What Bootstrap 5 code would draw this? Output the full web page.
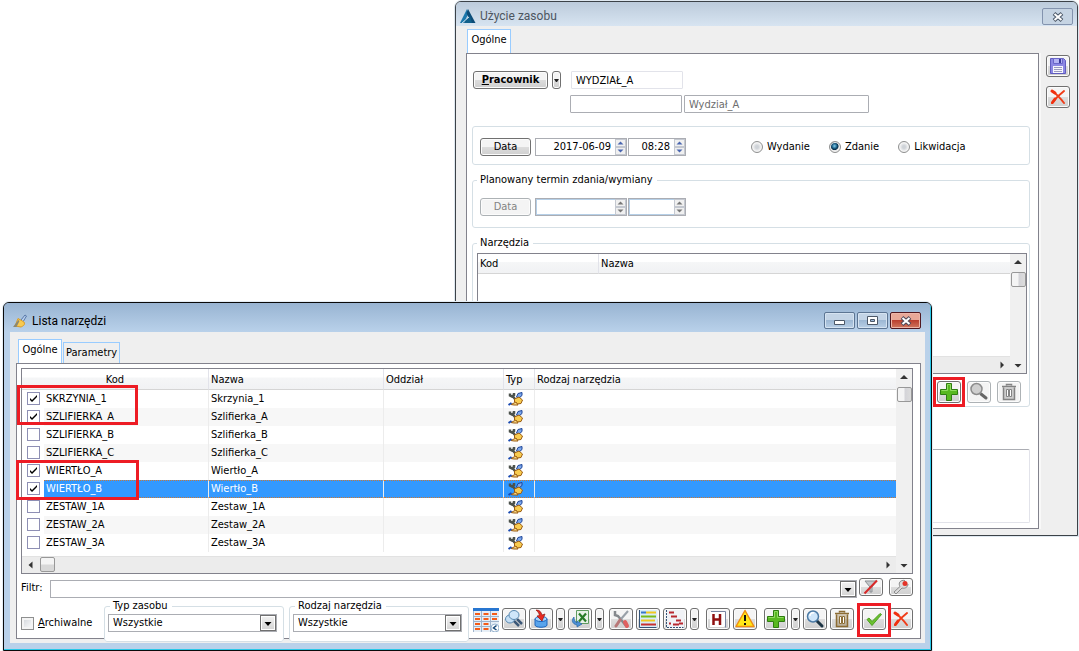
<!DOCTYPE html>
<html lang="pl">
<head>
<meta charset="utf-8">
<meta name="viewport" content="width=device-width, initial-scale=1">
<title>Lista narzędzi</title>
<link rel="stylesheet" href="https://cdn.jsdelivr.net/npm/bootstrap@5.3.0/dist/css/bootstrap.min.css">
<script src="https://cdn.jsdelivr.net/npm/bootstrap@5.3.0/dist/js/bootstrap.bundle.min.js"></script>
<style>
body { font: 11px/14px "DejaVu Sans Condensed", "Noto Sans", sans-serif; color: #000; background: #fff; }
.desktop { min-height: 100vh; }
.win { position: absolute; border: 1px solid #3c4248; border-radius: 6px 6px 0 0; overflow: hidden; background: #efefef; }
.win-back { left: 455px; right: 1px; top: 1px; box-shadow: 0 0 0 1px #dfe8f0; }
.win-front { left: 3px; right: 147px; top: 302px; border-color: #0a0a0a; background: #b9d1ea; box-shadow: 0 0 0 1px #e4edf5; }
.win-front::after { content: ""; position: absolute; inset: 0; border: solid #28c8e8; border-width: 0 1px 1px 0; pointer-events: none; }
.titlebar { font: 12px/16px Roboto, "Open Sans", sans-serif; }
.win-back .titlebar { height: 24px; padding: 2px 4px 0 4px; color: #4c5560; background: linear-gradient(#bccbdb, #d7e4f1); }
.win-front .titlebar { height: 29px; padding: 6px 8px 0 8px; background: linear-gradient(#98b4d2, #b9d1ea); }
.win-back .win-body { margin: 0 2px 0 3px; padding: 3px 5px 6px 7px; }
.win-front .win-body { margin: 0 6px 7px; padding: 7px 4px 4px 6px; background: #efefef; }
.caps { gap: 2px; padding: 3px 2px 0 0; }
.cap { width: 31px; height: 17px; padding: 0; border: 1px solid #5c7593; border-radius: 2px; background: linear-gradient(#c3d4e6 45%, #9db8d4 50%, #b8cfe6); box-shadow: inset 0 0 0 1px #d5e3f1; line-height: 0; }
.cap-off { border-color: #8393ae; background: #c6d4e3; box-shadow: none; }
.cap-red { border-color: #501820; background: linear-gradient(#e8a898 45%, #bb4030 50%, #d07860); box-shadow: inset 0 0 0 1px #edb5a8; }
.tabs { padding-left: 2px; gap: 1px; }
.win-back .tabs { padding-left: 1px; }
.tabs button { border: 1px solid #99ccff; border-bottom: 0; background: #efefef; padding: 0 2px; height: 21px; line-height: 20px; }
.tabs .on { height: 24px; background: #fff; padding-bottom: 4px; width: 44px; line-height: 16px; }
.pane { border: 1px solid #82828c; background: #fff; }
.win-back .pane { margin-right: 7px; padding: 17px 8px 5px 5px; box-shadow: 2px 0 #f8f8f8; }
.win-front .pane { padding: 4px 7px 0 4px; min-height: 276px; }
.side { gap: 9px; padding-top: 26px; }
.xbtn { border: 1px solid #707070; border-radius: 3px; background: linear-gradient(#f4f4f4 48%, #dcdcdc 52%, #cfcfcf); box-shadow: inset 0 0 0 1px #fcfcfc; padding: 0; line-height: 0; color: #000; flex: none; }
.xbtn:disabled { border-color: #adb2b5; background: #f4f4f4; color: #838383; }
.tool { width: 24px; height: 22px; }
.tool svg { width: 20px; height: 20px; }
.tool.low { height: 18px; }
.low svg { width: 18px; height: 16px; }
.drop { width: 9px; height: 22px; }
.drop.low { height: 18px; }
.drop::before { content: ""; display: block; margin: 0 auto; width: 5px; border: 2px solid transparent; border-top: 3px solid #222; border-bottom: 0; }
.wide { width: 51px; height: 18px; line-height: 14px; }
.person { width: 75px; height: 18px; line-height: 14px; font-weight: bold; }
.who { padding-left: 1px; margin-bottom: 6px; }
.who .xin { margin-left: 10px; }
.xin { height: 18px; border: 1px solid #abadb3; border-radius: 1px; padding: 0 4px; background: #fff; color: #000; min-width: 0; }
.xin-soft { border-color: #e2e3ea; }
.w112 { width: 112px; }
.w185 { width: 185px; color: #6d6d6d; }
.indent { padding-left: 98px; gap: 2px; }
fieldset.grp { border: 1px solid #d5dfe5; border-radius: 3px; }
.grp legend { float: none; width: auto; font-size: 11px; line-height: 14px; margin: 0; padding: 0 4px 0 3px; }
.when { height: 39px; padding: 3px 7px 0; margin-top: 13px; }
.radios { gap: 19px; margin-left: 64px; }
.plan { margin-top: 8px; padding: 0 7px 11px; }
.plan legend { margin-left: -3px; }
.plan > div { padding-top: 11px; }
.tools { margin-top: 8px; padding: 0 2px 3px 4px; }
.tools legend { margin-bottom: 3px; }
.acts { gap: 6px; padding: 7px 6px 0; }
.spin { border: 1px solid #abadb3; height: 18px; background: #fff; margin-right: 1px; }
.spin input { border: 0; padding: 0 4px 0 0; text-align: right; min-width: 0; flex: 1; background: #fff; }
.spin.dis input { box-shadow: inset 1px 1px #b5cfe7, inset 0 -1px #b5cfe7; }
.spin button { display: block; width: 11px; height: 8px; padding: 0; border: 1px solid #c4c8d0; background: #f0f0f0; line-height: 0; color: #4a66b0; }
.spin button:disabled { color: #777; }
.spin svg { width: 7px; height: 4px; display: block; margin: auto; }
.w92 { width: 92px; }
.w58 { width: 58px; }
.rad { appearance: none; width: 12px; height: 12px; margin: 0; border: 1px solid #8e8f8f; border-radius: 50%; background: radial-gradient(#cfd3d8 20%, #f4f4f4 60%); box-shadow: inset 0 0 0 1px #f4f4f4; }
.rad:checked { background: radial-gradient(circle at 45% 40%, #7fd0f0 0, #0c4a70 35%, #0c3048 45%, #e8e8e8 55%); }
.gridbox { border: 1px solid #82828c; background: #fff; }
.data { table-layout: fixed; width: 100%; border-collapse: separate; border-spacing: 0; }
.data th { height: 20px; padding: 1px 2px 0; font-weight: normal; border-bottom: 1px solid #d5d5d5; border-right: 1px solid #e2e3ea; background: linear-gradient(#fff 40%, #f5f6f7 45%, #f1f2f4); }
.front-rows .data th { height: 21px; }
.data td { height: 18px; padding: 0 2px; border-right: 1px solid #ececec; line-height: 16px; white-space: nowrap; }
.data th:last-child, .data td:last-child, .data td:first-child { border-right: 0; }
.data tbody tr:nth-child(even) td:not(:first-child) { background: #f7f7f7; }
.data tbody tr.sel td:not(:first-child) { background: #3399ff; color: #fff; border-top: 1px dotted #c87838; border-bottom: 1px dotted #c87838; line-height: 14px; }
.data svg { width: 16px; height: 16px; display: block; margin-left: 2px; }
.c-kod { width: 121px; }
.c1 { width: 22px; }
.c2 { width: 165px; }
.c3 { width: 175px; }
.c4 { width: 120px; }
.c5 { width: 31px; }
.chk { appearance: none; display: block; width: 13px; height: 13px; margin: 0 0 2px 3px; border: 1px solid #8e8fb4; background: #fff; }
.chk:checked { background: #fff url("data:image/svg+xml,%3Csvg xmlns='http://www.w3.org/2000/svg' viewBox='0 0 11 11'%3E%3Cpath d='M2 5v2l2 2 5-5V2L4 7z'/%3E%3C/svg%3E"); }
.chk-gray { margin: 0; border-color: #8e8f8f; background: linear-gradient(135deg, #cfd3d8, #fff); box-shadow: inset 0 0 0 2px #f4f4f4; }
.vbar { width: 16px; background: #f0f0f0; flex: none; gap: 2px; }
.hbar { height: 17px; background: #ececec; border-top: 1px solid #e2e2e2; gap: 2px; }
.thumb { border: 1px solid #989898; border-radius: 2px; width: 15px; height: 15px; background: linear-gradient(90deg, #f4f4f4 45%, #d4d4d8 55%, #dcdcdc); }
.hbar .thumb { background: linear-gradient(#f4f4f4 45%, #d8d8d8 55%); }
.arr { width: 16px; height: 16px; display: block; }
.tall { height: 82px; }
.front-rows { height: 187px; }
.mark-red { position: absolute; border: 3px solid #ed1c24; pointer-events: none; z-index: 2; }
.m1 { left: -5px; top: 16px; width: 121px; height: 40px; }
.m2 { left: -6px; top: 91px; width: 123px; height: 40px; }
.m3 { inset: -4px; }
.m4 { inset: -5px; }
.combo { position: relative; height: 19px; }
.combo select, .combo input { appearance: none; width: 100%; height: 18px; border: 1px solid #abadb3; padding: 0 4px; background: #fff; color: #000; border-radius: 0; display: block; }
.combo::after { content: ""; position: absolute; right: 1px; top: 1px; width: 16px; height: 16px; border: 1px solid #707070; pointer-events: none; background: url("data:image/svg+xml,%3Csvg xmlns='http://www.w3.org/2000/svg' viewBox='0 0 14 14'%3E%3Cpath d='M3.500 6h7L7 10z'/%3E%3C/svg%3E"), linear-gradient(#f2f2f2, #d4d4d4); box-shadow: inset 0 0 0 1px #fff; }
.filter { margin-top: 4px; }
.filter .combo { padding-top: 2px; height: 21px; margin-right: 2px; }
.filter .combo::after { top: 3px; }
.filter label { padding-top: 3px; width: 29px; }
.filter .tool + .tool { margin-left: 6px; }
.pick { width: 180px; background: #fff; margin-bottom: -4px; height: 43px; }
.pick legend { margin-left: 5px; }
.pick .combo { margin: 1px 6px 0 3px; }
.pick-2 { margin-left: 5px; }
.arch { padding-top: 17px; width: 83px; }
.notes { display: block; width: 100%; height: 74px; margin-top: 42px; border: 1px solid #e2e3ea; border-top-color: #abadb3; border-radius: 2px; resize: none; }
.strip { margin: 9px 0 0 auto; gap: 3px; }
.sep-s { margin-right: 2px; }
.sep-l { margin-right: 5px; }
.flat { border: 0; background: none; box-shadow: none; height: 24px; }
.brown { color: #8c6c34; }
</style>
</head>
<body>
<svg class="d-none" xmlns="http://www.w3.org/2000/svg">
  <symbol id="i-up" viewBox="0 0 16 16"><path d="M4 10 8 6l4 4z" fill="#333"/></symbol>
  <symbol id="i-down" viewBox="0 0 16 16"><path d="M4.500 7h7L8 10.500z" fill="#333"/></symbol>
  <symbol id="i-left" viewBox="0 0 16 16"><path d="M10.500 4.500v7L6.500 8z" fill="#333"/></symbol>
  <symbol id="i-right" viewBox="0 0 16 16"><path d="M6.500 4.500v7L10 8z" fill="#333"/></symbol>
  <symbol id="i-spu" viewBox="0 0 7 4"><path d="M.5 3.500 3.500.5l3 3z" fill="currentColor"/></symbol>
  <symbol id="i-spd" viewBox="0 0 7 4"><path d="M.5.5l3 3 3-3z" fill="currentColor"/></symbol>
  <symbol id="i-x" viewBox="0 0 20 20"><path d="M4 4c3 2 9 8 12 12M16 4C12 7 8 11 4 16" stroke="#f03c18" stroke-width="2" fill="none" stroke-linecap="round"/><path d="M4 4l3 2M4.500 15.500 7 12" stroke="#f03010" stroke-width="3" stroke-linecap="round"/></symbol>
  <symbol id="i-save" viewBox="0 0 20 20"><path d="M2.500 2.500h13l2 2v13h-15z" fill="#8c88e4" stroke="#605cc0"/><path d="M5.500 2.500h9v5h-9z" fill="#b4b4f4" stroke="#6a66c8"/><path d="M11 3h2v4h-2z" fill="#383898"/><path d="M5 10h10v7H5z" fill="#f6f6fc"/><path d="M6 11.500h8M6 13.500h8M6 15.500h8" stroke="#9a9ac0"/></symbol>
  <symbol id="i-plus" viewBox="0 0 20 20"><path d="M7.500 1.500h5v6h6v5h-6v6h-5v-6h-6v-5h6z" fill="#58b820" stroke="#2e7d10"/><path d="M8.500 8.500v-6h3v6h6" fill="none" stroke="#90dc60"/><path d="M2.500 8.500h6" stroke="#90dc60"/></symbol>
  <symbol id="i-mag" viewBox="0 0 20 20"><path d="m12 12 5 5" stroke="#1c3444" stroke-width="3" stroke-linecap="round"/><circle cx="8" cy="7.500" r="5.500" fill="#cfe6fa" stroke="#4c7aa4" stroke-width="1.500"/><path d="M5 7a3 3 0 0 1 4-3" stroke="#fff" stroke-width="1.500" fill="none"/></symbol>
  <symbol id="i-maggray" viewBox="0 0 20 20"><path d="m12 12 5 4" stroke="#666" stroke-width="3" stroke-linecap="round"/><circle cx="7.500" cy="7" r="5.500" fill="#cfcfcf" stroke="#8c8c8c" stroke-width="1.500"/></symbol>
  <symbol id="i-mags" viewBox="0 0 20 20"><path d="m10 12 5 5M13 10l5 5" stroke="#3c5878" stroke-width="2.500"/><ellipse cx="6" cy="10" rx="4.500" ry="4" fill="#c4def4" stroke="#5888b0"/><ellipse cx="10" cy="6" rx="5" ry="4.500" fill="#cfe6fa" stroke="#5888b0"/></symbol>
  <symbol id="i-trash" viewBox="0 0 20 20"><path d="M4.500 5.500h11v12h-11z" fill="currentColor" opacity=".35"/><path d="M7.500 3.500v-1h5v1M3 4.500h14M4.500 5.500v12h11v-12" fill="none" stroke="currentColor" stroke-width="1.500"/><path d="M7.500 7.500h2v7h-2zM10.500 7.500h2v7h-2z" fill="#fff" stroke="currentColor"/></symbol>
  <symbol id="i-tool" viewBox="0 0 16 16"><path d="M2 2.500v2l2 1 2-1.500v-2M4.500 5l2.500 3" stroke="#4c524c" stroke-width="2.500" fill="none"/><path d="M8.500 6 10 2.500l4-1v3L11 7z" fill="#7ca8ec" stroke="#1c4498"/><path d="M6.500 8 11 6l3.500 3-1.500 3.500-4 .500-2.500-2z" fill="#f8cc50" stroke="#9c5c10"/><path d="M3 13.500 8 11l2 3H6z" fill="#f8dc88" stroke="#9c5c10"/><path d="m.5 14 3-2" stroke="#1848b0" stroke-width="2"/></symbol>
  <symbol id="i-brush" viewBox="0 0 16 16"><path d="m9 7 4-5 1.500 1-3 5" fill="#b8d0f0" stroke="#5878a8"/><path d="M6 5.500 12 9c1.500 3-1 4-3 5L3 13z" fill="#f8ca50" stroke="#d89c28"/><path d="M1 14 6.500 7l1 1-3 6z" fill="#8c8870"/></symbol>
  <symbol id="i-calgrid" viewBox="0 0 26 24"><path d="M0 0h26v24H0z" fill="#e6eef6"/><path d="M0 0h26v3H0z" fill="#2876d0"/><path d="M2 6h5M10.500 6h5M19 6h5M2 11h5M10.500 11h5M19 11h5M2 16h5M10.500 16h5M2 21h5M10.500 21h5" stroke="#f45c18" stroke-width="2"/><path d="M0 8.500h26M0 13.500h26M0 18.500h18M8.500 3v21M17.500 3v21M.5 3v21" stroke="#a0b4cc"/><circle cx="22" cy="20" r="4" fill="#fff" stroke="#98b4d0"/><path d="m23.500 17.500-3 2.500 3 2" fill="none" stroke="#184878" stroke-width="1.500"/></symbol>
  <symbol id="i-import" viewBox="0 0 20 20"><path d="M4 10v6c0 3 12 3 12 0v-6" fill="#58a4ec" stroke="#1c64bc"/><ellipse cx="10" cy="10" rx="6" ry="2.500" fill="#a8d4fa" stroke="#1c64bc"/><path d="M5 1c4 0 5 2 6 5l3-1-3 7-5-5 2.500-.500C8 4 7 3 5 1z" fill="#e82820" stroke="#901810" stroke-width=".7"/></symbol>
  <symbol id="i-xls" viewBox="0 0 20 20"><path d="M6.500 1.500h12v13h-12z" fill="#e8f2e8" stroke="#609c60"/><path d="m9 4.500 7 8M16 4.500l-7 8" stroke="#287c28" stroke-width="2.200"/><path d="M4 8c-3 3-2 7 3 8v2l5-3-5-3v2c-2-1-3-3-3-6z" fill="#4c90d4" stroke="#2864a4" stroke-width=".7"/></symbol>
  <symbol id="i-wrench" viewBox="0 0 20 20"><path d="M4 2v4l3 1 9 11" fill="none" stroke="#84888c" stroke-width="2.500"/><path d="m17 2-7 8" stroke="#98a0a8" stroke-width="2"/><path d="m9 11-4 6" stroke="#b87878" stroke-width="3" stroke-linecap="round"/><path d="m14 13 2 4" stroke="#e06060" stroke-width="4" stroke-linecap="round"/></symbol>
  <symbol id="i-bars" viewBox="0 0 20 20"><path d="M2 1h17v18H2z" fill="#d8ecf8"/><path d="M3 3.500h5" stroke="#3878c8" stroke-width="2"/><path d="M8 3.500h10" stroke="#f0c820" stroke-width="2"/><path d="M3 7.500h15" stroke="#78bc18" stroke-width="2"/><path d="M3 11.500h14" stroke="#f0c820" stroke-width="2"/><path d="M3 15.500h15" stroke="#c83030" stroke-width="2"/><path d="M1.500 1v17.500h17" stroke="#345478" fill="none"/></symbol>
  <symbol id="i-gantt" viewBox="0 0 20 20"><path d="M2 1h17v18H2z" fill="#f0f2f6"/><path d="M4 3.500h5M6 7.500h6M11 11.500h5M8 15.500h6M14 14.500h4M4 14.500h2" stroke="#b82830" stroke-width="2"/><path d="M1.500 1v17.500h17" stroke="#345478" stroke-dasharray="2 1" fill="none"/></symbol>
  <symbol id="i-h" viewBox="0 0 20 20"><path d="M3 2.500h14.500v16" fill="#fff" stroke="#7884a0"/><path d="M2 3h14v15H2z" fill="#fff"/><path d="M5.500 5v11M12 5v11M5 10.500h7" stroke="#901010" stroke-width="2.500"/></symbol>
  <symbol id="i-warn" viewBox="0 0 20 20"><path d="M10 1.500 19 17.500H1z" fill="#ffe818" stroke="#f09010" stroke-width="1.500" stroke-linejoin="round"/><path d="M10 6v6M10 14v2" stroke="#111" stroke-width="2"/></symbol>
  <symbol id="i-ok" viewBox="0 0 20 20"><path d="m3 10.500 5 6L17.500 5.500 16 4.500l-8 8L5 9z" fill="#6cc030" stroke="#4ca020" stroke-linejoin="round"/></symbol>
  <symbol id="i-filt" viewBox="0 0 18 16"><path d="M3 2h11L10 8v5H8V8z" fill="#c4c8cc" stroke="#8c9094"/><path d="M2.500 14.500 15 1.500" stroke="#d82828" stroke-width="2"/></symbol>
  <symbol id="i-key" viewBox="0 0 18 16"><path d="M13 1.500c-5-1-7 3-5 6l-6 5.500 2 2 6-6c3 1 6-1 6-4" fill="#dcdcdc" stroke="#8c8c8c"/><circle cx="13" cy="4.500" r="2.500" fill="#e43428"/></symbol>
</svg>

<main class="desktop">
  <section class="win win-back" aria-label="Użycie zasobu">
    <header class="titlebar d-flex align-items-start">
      <svg width="16" height="16" viewBox="0 0 16 16" class="mt-1 me-1"><path d="M7 1 0 15h3.500l5-9z" fill="#1c78ac"/><path d="M8 1l7.500 14H11L6.500 5z" fill="#0c4c78"/><path d="m5 12 5-4 2 7H4z" fill="#10608c"/><path d="m2 15 7-6" stroke="#c8dcec" stroke-width="1"/></svg>
      <span class="flex-grow-1 mt-1">Użycie zasobu</span>
      <button class="cap cap-off mt-1" aria-label="Zamknij"><svg width="12" height="10" viewBox="0 0 12 10"><path d="m2 1.500 8 7M10 1.500l-8 7" stroke="#4c5868" stroke-width="4"/><path d="m2.500 2 7 6M9.500 2l-7 6" stroke="#fff" stroke-width="2"/></svg></button>
    </header>
    <div class="win-body d-flex">
      <div class="flex-grow-1">
        <div class="tabs d-flex align-items-end"><button class="on">Ogólne</button></div>
        <div class="pane">
          <div class="who d-flex align-items-center">
            <button class="xbtn person me-1"><u>P</u>racownik</button>
            <button class="xbtn drop low" aria-label="Wybierz rodzaj"></button>
            <input class="xin xin-soft w112" aria-label="Kod" value="WYDZIAŁ_A">
          </div>
          <div class="d-flex indent">
            <input class="xin w112" aria-label="Nazwisko">
            <input class="xin w185" aria-label="Nazwa wydziału" value="Wydział_A">
          </div>
          <fieldset class="grp when d-flex align-items-center">
            <button class="xbtn wide">Data</button>
            <div class="spin d-flex w92 ms-1"><input aria-label="Data" value="2017-06-09"><div><button aria-label="Więcej"><svg><use href="#i-spu"/></svg></button><button aria-label="Mniej"><svg><use href="#i-spd"/></svg></button></div></div>
            <div class="spin d-flex w58"><input aria-label="Godzina" value="08:28"><div><button aria-label="Więcej"><svg><use href="#i-spu"/></svg></button><button aria-label="Mniej"><svg><use href="#i-spd"/></svg></button></div></div>
            <div class="radios d-flex">
              <label class="d-flex align-items-center gap-1"><input class="rad" type="radio" name="op">Wydanie</label>
              <label class="d-flex align-items-center gap-1"><input class="rad" type="radio" name="op" checked>Zdanie</label>
              <label class="d-flex align-items-center gap-1"><input class="rad" type="radio" name="op">Likwidacja</label>
            </div>
          </fieldset>
          <fieldset class="grp plan">
            <legend>Planowany termin zdania/wymiany</legend>
            <div class="d-flex">
              <button class="xbtn wide" disabled>Data</button>
              <div class="spin dis d-flex w92 ms-1"><input aria-label="Planowana data" disabled><div><button disabled aria-label="Więcej"><svg><use href="#i-spu"/></svg></button><button disabled aria-label="Mniej"><svg><use href="#i-spd"/></svg></button></div></div>
              <div class="spin dis d-flex w58"><input aria-label="Planowana godzina" disabled><div><button disabled aria-label="Więcej"><svg><use href="#i-spu"/></svg></button><button disabled aria-label="Mniej"><svg><use href="#i-spd"/></svg></button></div></div>
            </div>
          </fieldset>
          <fieldset class="grp tools">
            <legend>Narzędzia</legend>
            <div class="gridbox d-flex">
              <div class="flex-grow-1">
                <table class="data"><colgroup><col class="c-kod"><col></colgroup><thead><tr><th>Kod</th><th>Nazwa</th></tr></thead></table>
                <div class="tall"></div>
                <div class="hbar d-flex justify-content-end"><svg class="arr"><use href="#i-right"/></svg></div>
              </div>
              <div class="vbar d-flex flex-column align-items-center">
                <svg class="arr"><use href="#i-up"/></svg><div class="thumb"></div><svg class="arr mt-auto"><use href="#i-down"/></svg>
              </div>
            </div>
            <div class="d-flex justify-content-end acts">
              <div class="position-relative"><button class="xbtn tool" aria-label="Dodaj"><svg><use href="#i-plus"/></svg></button><span class="mark-red m3"></span></div>
              <button class="xbtn tool" disabled aria-label="Podgląd"><svg><use href="#i-maggray"/></svg></button>
              <button class="xbtn tool" disabled aria-label="Usuń"><svg><use href="#i-trash"/></svg></button>
            </div>
          </fieldset>
          <textarea class="notes" aria-label="Uwagi"></textarea>
        </div>
      </div>
      <div class="side d-flex flex-column">
        <button class="xbtn tool" aria-label="Zapisz"><svg><use href="#i-save"/></svg></button>
        <button class="xbtn tool" aria-label="Anuluj"><svg><use href="#i-x"/></svg></button>
      </div>
    </div>
  </section>

  <section class="win win-front" aria-label="Lista narzędzi">
    <header class="titlebar d-flex align-items-start">
      <svg width="16" height="16" class="me-1 mt-1"><use href="#i-brush"/></svg>
      <span class="flex-grow-1 mt-1">Lista narzędzi</span>
      <div class="caps d-flex">
        <button class="cap" aria-label="Minimalizuj"><svg width="11" height="9" viewBox="0 0 11 9"><path d="M.5 4.500h10v4H.5z" fill="#fff" stroke="#4c5868"/></svg></button>
        <button class="cap" aria-label="Maksymalizuj"><svg width="11" height="9" viewBox="0 0 11 9"><path d="M.5.5h10v8H.5z" fill="#fff" stroke="#4c5868"/><path d="M3.500 3.500h4v2h-4z" fill="#9cb8d8" stroke="#4c5868"/></svg></button>
        <button class="cap cap-red" aria-label="Zamknij"><svg width="12" height="10" viewBox="0 0 12 10"><path d="m2 1.500 8 7M10 1.500l-8 7" stroke="#4c4858" stroke-width="4"/><path d="m2.500 2 7 6M9.500 2l-7 6" stroke="#fff" stroke-width="2"/></svg></button>
      </div>
    </header>
    <div class="win-body">
      <div class="tabs d-flex align-items-end"><button class="on">Ogólne</button><button>Parametry</button></div>
      <div class="pane">
        <div class="gridbox d-flex position-relative">
          <span class="mark-red m1"></span><span class="mark-red m2"></span>
          <div class="flex-grow-1">
            <div class="front-rows">
              <table class="data">
                <colgroup><col class="c1"><col class="c2"><col class="c3"><col class="c4"><col class="c5"><col></colgroup>
                <thead><tr><th colspan="2" class="text-center">Kod</th><th>Nazwa</th><th>Oddział</th><th>Typ</th><th>Rodzaj narzędzia</th></tr></thead>
                <tbody>
                  <tr><td><input class="chk" type="checkbox" aria-label="SKRZYNIA_1" checked></td><td>SKRZYNIA_1</td><td>Skrzynia_1</td><td></td><td><svg><use href="#i-tool"/></svg></td><td></td></tr>
                  <tr><td><input class="chk" type="checkbox" aria-label="SZLIFIERKA_A" checked></td><td>SZLIFIERKA_A</td><td>Szlifierka_A</td><td></td><td><svg><use href="#i-tool"/></svg></td><td></td></tr>
                  <tr><td><input class="chk" type="checkbox" aria-label="SZLIFIERKA_B"></td><td>SZLIFIERKA_B</td><td>Szlifierka_B</td><td></td><td><svg><use href="#i-tool"/></svg></td><td></td></tr>
                  <tr><td><input class="chk" type="checkbox" aria-label="SZLIFIERKA_C"></td><td>SZLIFIERKA_C</td><td>Szlifierka_C</td><td></td><td><svg><use href="#i-tool"/></svg></td><td></td></tr>
                  <tr><td><input class="chk" type="checkbox" aria-label="WIERTŁO_A" checked></td><td>WIERTŁO_A</td><td>Wiertło_A</td><td></td><td><svg><use href="#i-tool"/></svg></td><td></td></tr>
                  <tr class="sel"><td><input class="chk" type="checkbox" aria-label="WIERTŁO_B" checked></td><td>WIERTŁO_B</td><td>Wiertło_B</td><td></td><td><svg><use href="#i-tool"/></svg></td><td></td></tr>
                  <tr><td><input class="chk" type="checkbox" aria-label="ZESTAW_1A"></td><td>ZESTAW_1A</td><td>Zestaw_1A</td><td></td><td><svg><use href="#i-tool"/></svg></td><td></td></tr>
                  <tr><td><input class="chk" type="checkbox" aria-label="ZESTAW_2A"></td><td>ZESTAW_2A</td><td>Zestaw_2A</td><td></td><td><svg><use href="#i-tool"/></svg></td><td></td></tr>
                  <tr><td><input class="chk" type="checkbox" aria-label="ZESTAW_3A"></td><td>ZESTAW_3A</td><td>Zestaw_3A</td><td></td><td><svg><use href="#i-tool"/></svg></td><td></td></tr>
                </tbody>
              </table>
            </div>
            <div class="hbar d-flex"><svg class="arr"><use href="#i-left"/></svg><div class="thumb"></div><svg class="arr ms-auto"><use href="#i-right"/></svg></div>
          </div>
          <div class="vbar d-flex flex-column align-items-center">
            <svg class="arr"><use href="#i-up"/></svg><div class="thumb"></div><svg class="arr mt-auto"><use href="#i-down"/></svg>
          </div>
        </div>
        <div class="filter d-flex">
          <label for="filtr">Filtr:</label>
          <div class="combo flex-grow-1"><input id="filtr"></div>
          <button class="xbtn tool low" aria-label="Wyczyść filtr"><svg><use href="#i-filt"/></svg></button>
          <button class="xbtn tool low" aria-label="Konfiguruj filtr"><svg><use href="#i-key"/></svg></button>
        </div>
        <div class="bottom d-flex align-items-start">
          <label class="arch d-flex align-items-center gap-1"><input class="chk chk-gray" type="checkbox"><span><u>A</u>rchiwalne</span></label>
          <fieldset class="grp pick"><legend>Typ zasobu</legend><div class="combo"><select aria-label="Typ zasobu"><option>Wszystkie</option></select></div></fieldset>
          <fieldset class="grp pick pick-2"><legend>Rodzaj narzędzia</legend><div class="combo"><select aria-label="Rodzaj narzędzia"><option>Wszystkie</option></select></div></fieldset>
          <div class="strip d-flex">
            <button class="xbtn flat" aria-label="Harmonogram"><svg width="26" height="24"><use href="#i-calgrid"/></svg></button>
            <button class="xbtn tool" aria-label="Szukaj"><svg><use href="#i-mags"/></svg></button>
            <button class="xbtn tool" aria-label="Import"><svg><use href="#i-import"/></svg></button>
            <button class="xbtn drop" aria-label="Import – więcej"></button>
            <button class="xbtn tool" aria-label="Eksport do arkusza"><svg><use href="#i-xls"/></svg></button>
            <button class="xbtn drop sep-s" aria-label="Eksport – więcej"></button>
            <button class="xbtn tool" aria-label="Serwis"><svg><use href="#i-wrench"/></svg></button>
            <button class="xbtn tool" aria-label="Obciążenie"><svg><use href="#i-bars"/></svg></button>
            <button class="xbtn tool" aria-label="Wykres Gantta"><svg><use href="#i-gantt"/></svg></button>
            <button class="xbtn drop me-1" aria-label="Wykres – więcej"></button>
            <button class="xbtn tool" aria-label="Historia"><svg><use href="#i-h"/></svg></button>
            <button class="xbtn tool me-1" aria-label="Ostrzeżenia"><svg><use href="#i-warn"/></svg></button>
            <button class="xbtn tool" aria-label="Dodaj"><svg><use href="#i-plus"/></svg></button>
            <button class="xbtn drop" aria-label="Dodaj – więcej"></button>
            <button class="xbtn tool" aria-label="Podgląd"><svg><use href="#i-mag"/></svg></button>
            <button class="xbtn tool brown sep-l" aria-label="Usuń"><svg><use href="#i-trash"/></svg></button>
            <div class="position-relative"><button class="xbtn tool" aria-label="Wybierz"><svg><use href="#i-ok"/></svg></button><span class="mark-red m4"></span></div>
            <button class="xbtn tool" aria-label="Zamknij listę"><svg><use href="#i-x"/></svg></button>
          </div>
        </div>
      </div>
    </div>
  </section>
</main>
</body>
</html>
